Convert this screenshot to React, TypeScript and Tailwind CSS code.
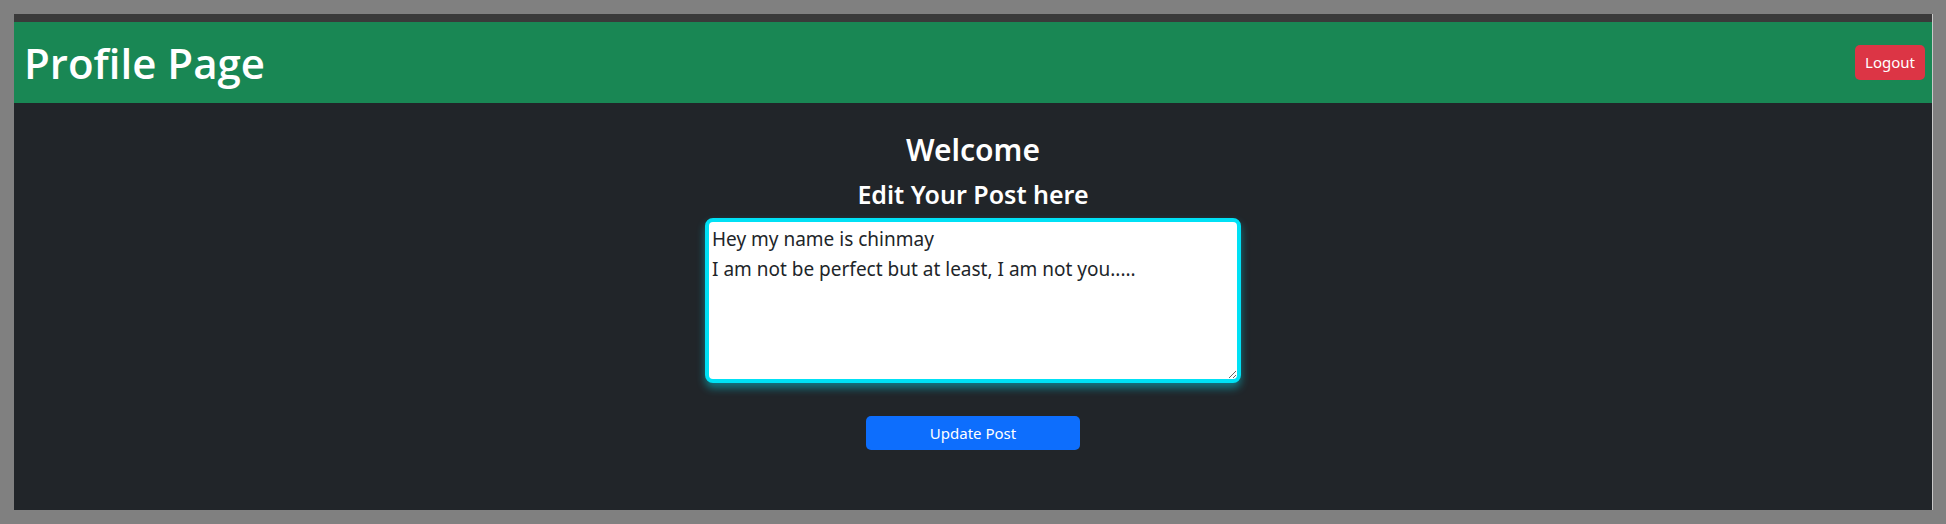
const font = { fontFamily: '"Noto Sans", "Open Sans", sans-serif' };

const App = () => {
  return (
    <div className="h-[524px] w-full bg-[#808080] pb-[14px] pl-[14px] pr-[13px] pt-[14px]" style={font}>
      <div className="flex h-full flex-col border-r border-[#c8c8c8] bg-[#212529]">
        <div className="h-[8px] bg-[#3a3a3a]" />
        <header className="flex h-[81px] items-center justify-between bg-[#198754] pl-[10px] pr-[7px]">
          <h1
            className="text-[42px] font-semibold leading-none text-white"
            style={{ fontFamily: '"Open Sans", "Noto Sans", sans-serif' }}
          >
            Profile Page
          </h1>
          <button className="h-[35px] rounded-[5px] bg-[#dc3545] px-[10px] text-[15px] text-white">
            Logout
          </button>
        </header>

        <main className="flex flex-1 flex-col items-center">
          <h2 className="mt-[25px] text-[30px] font-semibold leading-[44px] text-white">Welcome</h2>
          <h3 className="mt-[4px] text-[25px] font-semibold leading-[36px] text-white">
            Edit Your Post here
          </h3>
          <textarea
            className="mt-[6px] h-[165px] w-[536px] rounded-[8px] border-[4px] border-[#00e1f5] bg-white px-[3px] py-[2px] text-[19px] leading-[30px] text-[#212529] shadow-[0_5px_8px_rgba(0,225,245,0.45)] outline-none"
            defaultValue={"Hey my name is chinmay\nI am not be perfect but at least, I am not you....."}
          />
          <button className="mt-[33px] h-[34px] w-[214px] rounded-[5px] bg-[#0d6efd] text-[15px] text-white">
            Update Post
          </button>
        </main>
      </div>
    </div>
  );
};

export default App;
